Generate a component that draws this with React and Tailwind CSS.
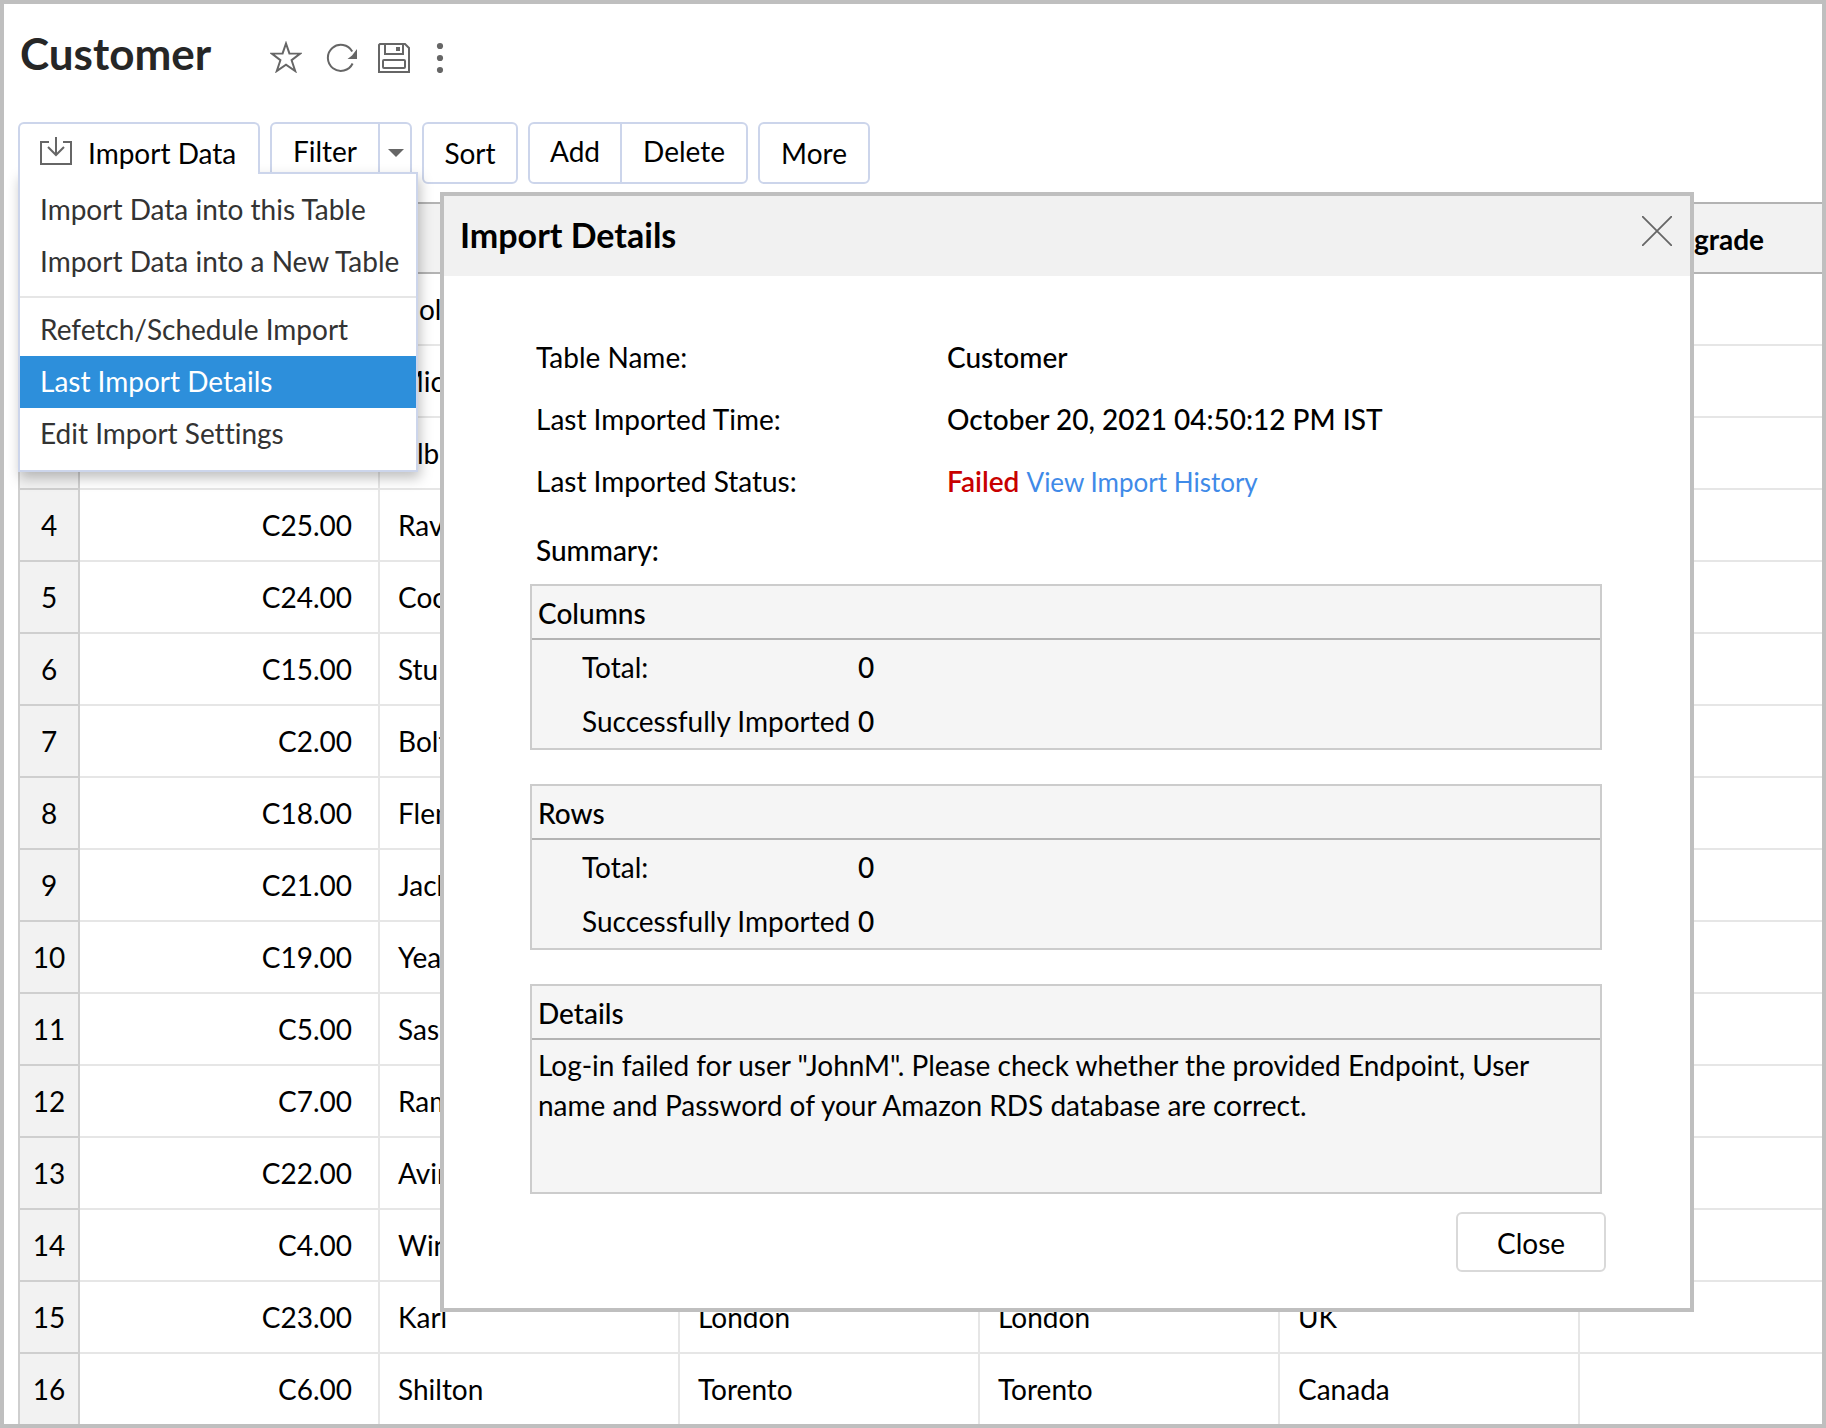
const rows = [
  ["", "", "Holt"],
  ["", "", "Mich"],
  ["", "", "Alber"],
  ["4", "C25.00", "Ravi"],
  ["5", "C24.00", "Coop"],
  ["6", "C15.00", "Stu"],
  ["7", "C2.00", "Bolt"],
  ["8", "C18.00", "Flem"],
  ["9", "C21.00", "Jack"],
  ["10", "C19.00", "Yea"],
  ["11", "C5.00", "Sas"],
  ["12", "C7.00", "Ram"],
  ["13", "C22.00", "Avin"],
  ["14", "C4.00", "Win"],
  ["15", "C23.00", "Karl", "London", "London", "UK"],
  ["16", "C6.00", "Shilton", "Torento", "Torento", "Canada"],
];

const semi = "font-medium";

function TitleIcons() {
  return (
    <div className="flex items-center text-[#666]">
      <button type="button" aria-label="Favourite" className="w-8">
        <svg viewBox="0 0 32 32" className="h-8 w-8" fill="none" stroke="currentColor" strokeWidth="2">
          <path d="M16 2.5 L19.4 12.4 L30.2 12.6 L21.6 19.2 L25.2 30 L16 23.6 L6.8 30 L10.4 19.2 L1.8 12.6 L12.6 12.4 Z" />
        </svg>
      </button>
      <button type="button" aria-label="Refresh" className="ml-6 w-8">
        <svg viewBox="0 0 32 32" className="h-8 w-8" fill="none" stroke="currentColor" strokeWidth="2">
          <path d="M26.6 22.5 A13 13 0 1 1 26.2 10.5" />
          <path d="M31 8 V18 H21.5 L26 14.4 Z" fill="currentColor" stroke="none" />
        </svg>
      </button>
      <button type="button" aria-label="Save" className="ml-5 w-8">
        <svg viewBox="0 0 32 32" className="h-8 w-8" fill="none" stroke="currentColor" strokeWidth="2">
          <path d="M2 3 H27 L31 7 V31 H1 V4 Z" />
          <path d="M7 3 V13 H25 V4" />
          <rect x="5" y="19" width="22" height="8" rx="1" />
          <rect x="18" y="6" width="4" height="4" fill="currentColor" stroke="none" />
        </svg>
      </button>
      <button type="button" aria-label="More options" className="ml-6 w-3">
        <svg viewBox="0 0 12 32" className="h-8 w-3" fill="currentColor">
          <circle cx="6" cy="5" r="3.1" />
          <circle cx="6" cy="17" r="3.1" />
          <circle cx="6" cy="29" r="3.1" />
        </svg>
      </button>
    </div>
  );
}

function MenuItem({ children, active }) {
  return (
    <button
      type="button"
      role="menuitem"
      className={
        "block h-[52px] w-full pb-[2px] pl-5 text-left whitespace-nowrap " +
        (active ? "bg-[#2d8fdb] text-white" : "text-[#333]")
      }
    >
      {children}
    </button>
  );
}

function ImportMenu() {
  return (
    <div className="relative">
      <button
        type="button"
        aria-expanded="true"
        className="relative z-20 flex h-[52px] w-[242px] items-center rounded-t-md border-2 border-b-0 border-[#ccd5eb] bg-white pt-2 pl-5"
      >
        <svg viewBox="0 0 32 28" className="-mt-1 h-7 w-8 text-[#666]" fill="none" stroke="currentColor" strokeWidth="2">
          <path d="M9 5 H1 V27 H31 V5 H23" />
          <path d="M16 0 V18 M8 10 L16 18 L24 10" />
        </svg>
        <span className="ml-4">Import Data</span>
      </button>
      <div
        role="menu"
        className="absolute top-[50px] left-0 z-10 w-[400px] border-2 border-[#ccd5eb] bg-white py-[10px] shadow-[2px_6px_12px_rgba(0,0,0,0.25)]"
      >
        <MenuItem>Import Data into this Table</MenuItem>
        <MenuItem>Import Data into a New Table</MenuItem>
        <hr className="mt-2 mb-[6px] border-t-2 border-[#e6e6e6]" />
        <MenuItem>Refetch/Schedule Import</MenuItem>
        <MenuItem active>Last Import Details</MenuItem>
        <MenuItem>Edit Import Settings</MenuItem>
      </div>
    </div>
  );
}

function Toolbar() {
  const box = "flex h-[62px] rounded-md border-2 border-[#ccd5eb] bg-white";
  return (
    <div className="flex h-[62px] gap-[10px] pl-[14px]">
      <ImportMenu />
      <div className={box}>
        <button type="button" className="w-[108px] border-r-2 border-[#ccd5eb] pb-1">Filter</button>
        <button type="button" aria-label="Filter options" className="flex w-[30px] items-center justify-center pl-[2px]">
          <svg viewBox="0 0 16 8" className="h-2 w-4" fill="#666">
            <path d="M0 0 H16 L8 8 Z" />
          </svg>
        </button>
      </div>
      <button type="button" className={box + " w-24 items-center justify-center"}>Sort</button>
      <div className={box}>
        <button type="button" className="w-[92px] border-r-2 border-[#ccd5eb] pb-1">Add</button>
        <button type="button" className="w-[124px] pb-1">Delete</button>
      </div>
      <button type="button" className={box + " w-28 items-center justify-center"}>More</button>
    </div>
  );
}

function DataTable() {
  return (
    <div className="mt-[18px] pl-[14px]">
      <table className="w-full table-fixed border-separate border-spacing-0">
        <colgroup>
          <col className="w-[62px]" />
          <col className="w-[300px]" />
          <col className="w-[300px]" />
          <col className="w-[300px]" />
          <col className="w-[300px]" />
          <col className="w-[300px]" />
          <col />
        </colgroup>
        <thead>
          <tr className="h-[72px] bg-[#f2f2f2]">
            {[0, 1, 2, 3, 4, 5].map((i) => (
              <th key={i} className="border-y-2 border-[#b3b3b3]" />
            ))}
            <th className="border-y-2 border-[#b3b3b3] pt-[2px] pr-[58px] text-right font-bold">Upgrade</th>
          </tr>
        </thead>
        <tbody>
          {rows.map(([n, id, ...rest], r) => (
            <tr key={r} className="h-[72px]">
              <td className="border-x-2 border-b-2 border-[#cfcfcf] bg-[#f2f2f2] text-center">{n}</td>
              <td className="border-r-2 border-b-2 border-[#e6e6e6] pr-[26px] text-right">{id}</td>
              {[0, 1, 2, 3].map((i) => (
                <td key={i} className="border-r-2 border-b-2 border-[#e6e6e6] pl-[18px]">{rest[i]}</td>
              ))}
              <td className="border-b-2 border-[#e6e6e6]" />
            </tr>
          ))}
        </tbody>
      </table>
    </div>
  );
}

function Panel({ title, children }) {
  return (
    <section className="mb-[34px] border-2 border-[#ccc] bg-[#f5f5f5]">
      <h3 className={"h-[54px] border-b-2 border-[#b3b3b3] pl-[6px] leading-[54px] " + semi}>{title}</h3>
      {children}
    </section>
  );
}

function Counts() {
  return (
    <dl className="grid grid-cols-[276px_1fr] pl-[50px] leading-[54px]">
      <dt className="whitespace-nowrap">Total:</dt>
      <dd className={semi}>0</dd>
      <dt className="whitespace-nowrap">Successfully Imported</dt>
      <dd className={semi}>0</dd>
    </dl>
  );
}

function ImportDetails() {
  return (
    <div
      role="dialog"
      aria-labelledby="dialog-title"
      className="absolute top-[188px] right-[128px] left-[436px] z-30 border-4 border-[#bfbfbf] bg-white"
    >
      <header className="flex h-20 items-center justify-between bg-[#f1f1f1] pr-[18px] pb-[2px] pl-4">
        <h2 id="dialog-title" className="text-[34px] font-bold">Import Details</h2>
        <button type="button" aria-label="Close dialog" className="-mt-2">
          <svg viewBox="0 0 30 30" className="h-[30px] w-[30px]" fill="none" stroke="#666" strokeWidth="1.8">
            <path d="M0 0 L30 30 M30 0 L0 30" />
          </svg>
        </button>
      </header>
      <div className="pt-[50px] pr-[88px] pb-9 pl-[86px]">
        <dl className="grid auto-rows-[62px] grid-cols-[411px_1fr] pl-[6px] leading-[62px]">
          <dt>Table Name:</dt>
          <dd className={semi}>Customer</dd>
          <dt>Last Imported Time:</dt>
          <dd className={semi}>October 20, 2021 04:50:12 PM IST</dd>
          <dt>Last Imported Status:</dt>
          <dd>
            <span className="font-semibold text-[#c80000]">Failed</span>{" "}
            <a href="#history" className="text-[26px] text-[#3f8ae8]">View Import History</a>
          </dd>
        </dl>
        <h3 className={"mt-2 mb-1 pl-[6px] leading-[60px] " + semi}>Summary:</h3>
        <Panel title="Columns">
          <Counts />
        </Panel>
        <Panel title="Rows">
          <Counts />
        </Panel>
        <Panel title="Details">
          <p className="min-h-[152px] pt-[5px] pr-12 pl-[6px] leading-10">
            Log-in failed for user "JohnM". Please check whether the provided Endpoint, User name and Password of your
            Amazon RDS database are correct.
          </p>
        </Panel>
        <div className="-mt-4 -mr-1 flex justify-end">
          <button type="button" className="h-[60px] w-[150px] rounded-md border-2 border-[#d9d9d9] bg-white pt-[2px]">Close</button>
        </div>
      </div>
    </div>
  );
}

export default function App() {
  return (
    <div className="relative h-screen w-full overflow-hidden border-4 border-[#bfbfbf] bg-white font-['Lato',sans-serif] text-[28px] leading-9 text-black [font-variant-ligatures:none]">
      <header className="flex h-[118px] items-start gap-[59px] pt-5 pl-4">
        <h1 className="text-[44px] leading-[58px] font-bold text-[#262626]">Customer</h1>
        <div className="pt-[17px]">
          <TitleIcons />
        </div>
      </header>
      <Toolbar />
      <DataTable />
      <ImportDetails />
    </div>
  );
}
